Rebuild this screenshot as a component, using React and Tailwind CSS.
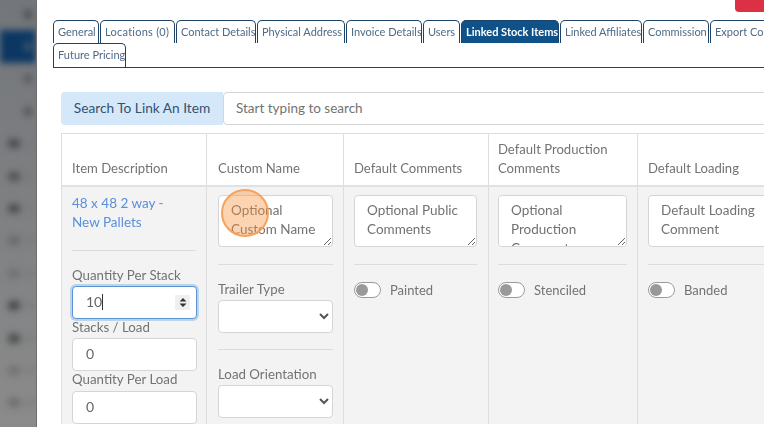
const TABS_ROW_1 = [
  { label: 'General', width: 'w-[46px]' },
  { label: 'Locations (0)', width: 'w-[75px]', spaced: true },
  { label: 'Contact Details', width: 'w-[80px]' },
  { label: 'Physical Address', width: 'w-[88px]' },
  { label: 'Invoice Details', width: 'w-[76px]' },
  { label: 'Users', width: 'w-[37px]' },
  { label: 'Linked Stock Items', width: 'w-[98px]', active: true },
  { label: 'Linked Affiliates', width: 'w-[82px]' },
  { label: 'Commission', width: 'w-[66px]' },
  { label: 'Export Contacts', width: 'w-[80px]' },
]

const SIDE_ITEMS = [
  { icon: 'ml-[24px] bg-[#4a4a4a]' },
  { icon: 'ml-[24px] bg-[#3f5873]', active: true },
  { icon: 'ml-[24px] bg-[#555555]' },
  { icon: 'ml-[24px] bg-[#4f4f4f]' },
  { icon: 'ml-[8px] bg-[#484848]' },
  { icon: 'ml-[8px] bg-[#505050]' },
  { icon: 'ml-[8px] bg-[#484848]' },
  { icon: 'ml-[8px] bg-[#686868]' },
  { icon: 'ml-[8px] bg-[#707070]' },
  { icon: 'ml-[8px] bg-[#444444]' },
  { icon: 'ml-[8px] bg-[#484848]' },
  { icon: 'ml-[8px] bg-[#707070]' },
  { icon: 'ml-[8px] bg-[#6c6c6c]' },
]

function Sidebar() {
  return (
    <aside className="w-[37px] shrink-0 h-full overflow-hidden bg-gradient-to-b from-[#73767a] to-[#8b8b8b] border-r border-[#6e6e6e]">
      <div className="-mt-[2px] blur-[3.5px]">
        {SIDE_ITEMS.map((item, i) => (
          <div
            key={i}
            className={`h-[32.4px] flex items-center gap-[4px] ${item.active ? 'bg-[#0c3763]' : ''}`}
          >
            <span className={`w-[12px] h-[9px] rounded-sm ${item.icon}`} />
            <span className="h-[3px] flex-1 bg-[#767676]" />
          </div>
        ))}
      </div>
    </aside>
  )
}

function Tab({ label, width, active, spaced, height = 'h-[23px]' }) {
  return (
    <div
      className={`${width} ${height} shrink-0 box-border pl-[4px] border-x border-t rounded-t-[5px] border-[#1d4468] text-[11px] leading-[21px] whitespace-nowrap overflow-hidden ${
        active ? 'bg-[#0e5289] text-white font-bold' : 'bg-white text-[#506a84]'
      } ${spaced ? 'tracking-[0.25px]' : ''}`}
    >
      {label}
    </div>
  )
}

function Label({ children, gap = 'mb-px' }) {
  return <div className={`text-[13.3px] leading-[20px] text-[#737373] ${gap}`}>{children}</div>
}

function Divider({ className }) {
  return <div className={`h-px bg-[#dcdcdc] ${className}`} />
}

function NumberBox({ value }) {
  return (
    <input
      readOnly
      value={value}
      className="block w-[125px] h-[33px] pl-[13px] pr-[13px] pb-[2px] bg-white border border-[#d5d5d5] rounded-[4px] text-[14px] text-[#666666] outline-none"
    />
  )
}

function Note({ text, width = 'w-full' }) {
  return (
    <textarea
      readOnly
      placeholder={text}
      className={`block ${width} h-[52px] px-[12px] py-[5px] bg-white border border-[#d5d5d5] rounded-[4px] text-[13.5px] leading-[19px] text-[#737373] placeholder:text-[#737373] outline-none`}
    />
  )
}

function Picker() {
  return (
    <select className="block w-full h-[33px] bg-white border border-[#d5d5d5] rounded-[4px] text-[14px] text-[#555555] outline-none" />
  )
}

function Toggle({ label }) {
  return (
    <div className="mt-[17px] flex items-center gap-[9px]">
      <span className="w-[27px] h-[16px] box-border flex items-center pl-[1px] border border-[#9a9a9a] rounded-full bg-white">
        <span className="w-[12px] h-[12px] rounded-full bg-[#999999]" />
      </span>
      <span className="text-[13px] leading-[16px] text-[#737373]">{label}</span>
    </div>
  )
}

function Header({ children, width, pad = 'pl-[10px] pr-[10px]' }) {
  return (
    <th className={`${width} ${pad} h-[52px] align-bottom pb-[7px] border-r border-[#dedede] text-left font-normal text-[13.1px] leading-[19px] text-[#737373]`}>
      {children}
    </th>
  )
}

function Cell({ children, width, pad = 'pl-[10px] pr-[10px]' }) {
  return <td className={`${width} ${pad} align-top pt-[8px] border-r border-[#dedede]`}>{children}</td>
}

export default function App() {
  return (
    <div className="relative w-[764px] h-[427px] overflow-hidden flex bg-white font-['Lato','Liberation_Sans',sans-serif]">
      <Sidebar />

      <main className="relative flex-1 min-w-0 pl-[16px] pt-[20px]">
        <div className="absolute right-0 top-0 w-[29px] h-[12px] rounded-bl-[4px] bg-[#dc3045]" />

        <div className="w-[840px] flex">
          {TABS_ROW_1.map((tab) => (
            <div key={tab.label} className="mr-px">
              <Tab {...tab} />
            </div>
          ))}
        </div>
        <div className="w-[800px] border-b border-[#1d4468]">
          <Tab label="Future Pricing" width="w-[73px]" height="h-[24px]" />
        </div>

        <div className="ml-[8px] mt-[24px] w-[760px] h-[33px] flex">
          <div className="w-[162px] flex items-center justify-center rounded-l-[4px] bg-[#d5e8fa] text-[13.7px] text-[#34526f]">
            Search To Link An Item
          </div>
          <input
            readOnly
            placeholder="Start typing to search"
            className="flex-1 px-[12px] bg-white border border-[#d5d5d5] rounded-l-[4px] text-[13.5px] placeholder:text-[#737373] outline-none"
          />
        </div>

        <table className="ml-[8px] mt-[8px] w-[800px] table-fixed border-collapse border-t border-l border-[#dedede]">
          <thead>
            <tr className="border-b-[2px] border-[#dfe1e5]">
              <Header width="w-[145px]">Item Description</Header>
              <Header width="w-[137px]" pad="pl-[11px] pr-[10px]">Custom Name</Header>
              <Header width="w-[145px]" pad="pl-[10px] pr-[11px]">Default Comments</Header>
              <Header width="w-[149px]" pad="pl-[9px] pr-[10px]">
                Default Production
                <br />
                Comments
              </Header>
              <Header width="w-[224px]">Default Loading</Header>
            </tr>
          </thead>
          <tbody>
            <tr className="bg-[#f3f3f3]">
              <Cell width="w-[145px]">
                <div className="-mt-px text-[13.5px] leading-[19px] text-[#5a8fdc]">
                  48 x 48 2 way -
                  <br />
                  New Pallets
                </div>
                <Divider className="mt-[18px] mb-[14px]" />
                <Label>Quantity Per Stack</Label>
                <div className="relative w-[125px] h-[33px] pl-[13px] pr-[13px] pb-px bg-white border border-[#5b93d0] rounded-[4px] ring-[2px] ring-[#bcd3ea] flex items-center text-[14px] text-[#666666]">
                  10
                  <span className="w-px h-[16px] bg-[#333333]" />
                  <span className="absolute right-[6px] top-[8px] w-[15px] h-[15px] flex items-center justify-center bg-[#f0f0f0]">
                    <svg width="8" height="11" viewBox="0 0 8 11">
                      <path d="M4 1 7.5 4.5H.5zM4 10 .5 6.5h7z" fill="#333333" />
                    </svg>
                  </span>
                </div>
                <div className="-mt-[2px]">
                  <Label>Stacks / Load</Label>
                </div>
                <NumberBox value="0" />
                <div className="-mt-[2px]">
                  <Label gap="mb-[2px]">Quantity Per Load</Label>
                </div>
                <NumberBox value="0" />
              </Cell>
              <Cell width="w-[137px]" pad="pl-[11px] pr-[10px]">
                <Note text="Optional Custom Name" />
                <Divider className="mt-[17px] mb-[14px]" />
                <Label>Trailer Type</Label>
                <Picker />
                <Divider className="mt-[16px] mb-[14px]" />
                <Label>Load Orientation</Label>
                <Picker />
              </Cell>
              <Cell width="w-[145px]" pad="pl-[10px] pr-[11px]">
                <Note text="Optional Public Comments" />
                <Divider className="mt-[17px]" />
                <Toggle label="Painted" />
              </Cell>
              <Cell width="w-[149px]" pad="pl-[9px] pr-[10px]">
                <Note text="Optional Production Comment" />
                <Divider className="mt-[17px]" />
                <Toggle label="Stenciled" />
              </Cell>
              <Cell width="w-[224px]">
                <Note text="Default Loading Comment" width="w-[130px]" />
                <Divider className="mt-[17px]" />
                <Toggle label="Banded" />
              </Cell>
            </tr>
          </tbody>
        </table>
      </main>

      {/* click marker from the screen recording */}
      <div className="absolute left-[221px] top-[189px] w-[48px] h-[48px] rounded-full bg-[#f7943c]/40 border-[2px] border-[#f7a25c]" />
    </div>
  )
}
